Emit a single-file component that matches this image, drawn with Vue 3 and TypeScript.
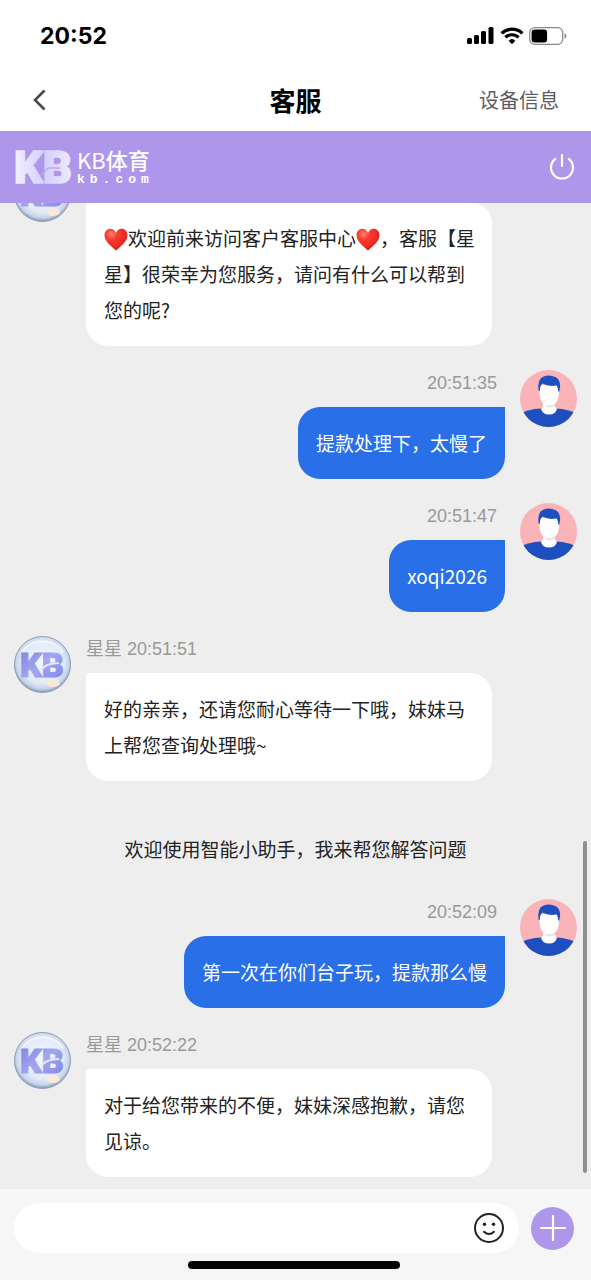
<script setup lang="ts">
import { ref } from 'vue'

interface Message {
  id: number
  kind: 'agent' | 'user' | 'system'
  time?: string
  text: string
}

const agentName = '星星'
const draft = ref('')

const messages = ref<Message[]>([
  { id: 1, kind: 'agent', text: '❤欢迎前来访问客户客服中心❤，客服【星星】很荣幸为您服务，请问有什么可以帮到您的呢?' },
  { id: 2, kind: 'user', time: '20:51:35', text: '提款处理下，太慢了' },
  { id: 3, kind: 'user', time: '20:51:47', text: 'xoqi2026' },
  { id: 4, kind: 'agent', time: '20:51:51', text: '好的亲亲，还请您耐心等待一下哦，妹妹马上帮您查询处理哦~' },
  { id: 5, kind: 'system', text: '欢迎使用智能小助手，我来帮您解答问题' },
  { id: 6, kind: 'user', time: '20:52:09', text: '第一次在你们台子玩，提款那么慢' },
  { id: 7, kind: 'agent', time: '20:52:22', text: '对于给您带来的不便，妹妹深感抱歉，请您见谅。' },
])

const parts = (text: string): string[] => text.split(/(❤)/).filter((p) => p !== '')
</script>

<template>
  <div class="page">
    <svg class="defs" width="0" height="0" aria-hidden="true">
      <defs>
        <radialGradient id="ball" cx="50%" cy="46%" r="54%">
          <stop offset="0" stop-color="#f4f7fe" />
          <stop offset="0.68" stop-color="#e3ebfa" />
          <stop offset="0.88" stop-color="#c6d3ea" />
          <stop offset="1" stop-color="#8193ac" />
        </radialGradient>
        <linearGradient id="ballText" x1="0" y1="0" x2="1" y2="1">
          <stop offset="0" stop-color="#7d7fdc" />
          <stop offset="0.5" stop-color="#a3a7f0" />
          <stop offset="1" stop-color="#7c7fe6" />
        </linearGradient>
        <linearGradient id="logoText" x1="0" y1="0" x2="1" y2="0">
          <stop offset="0" stop-color="#f2efff" />
          <stop offset="0.55" stop-color="#d6cffb" />
          <stop offset="1" stop-color="#efebff" />
        </linearGradient>
        <radialGradient id="heart" cx="30%" cy="25%" r="80%">
          <stop offset="0" stop-color="#ff8573" />
          <stop offset="0.3" stop-color="#f8402f" />
          <stop offset="0.75" stop-color="#ea2a20" />
          <stop offset="1" stop-color="#c81d18" />
        </radialGradient>
        <clipPath id="round"><circle cx="28.5" cy="28.5" r="28.5" /></clipPath>
      </defs>
    </svg>

    <div class="status">
      <span class="clock">20:52</span>
      <div class="indicators">
        <svg width="28" height="18" viewBox="0 0 28 18" aria-hidden="true">
          <rect x="0" y="11" width="5" height="6" rx="1.5" />
          <rect x="7" y="8" width="5" height="9" rx="1.5" />
          <rect x="14" y="4" width="5" height="13" rx="1.5" />
          <rect x="21.5" y="0" width="5" height="17" rx="1.5" />
        </svg>
        <svg width="24" height="18" viewBox="0 0 24 18" aria-hidden="true">
          <g fill="none" stroke="#000" stroke-width="3.2">
            <path d="M1.6 6.4a15 15 0 0 1 20.800 0" />
            <path d="M5.4 10.4a9.500 9.500 0 0 1 13.200 0" />
          </g>
          <path d="M8.600 13.700a5 5 0 0 1 6.800 0L12 17.300z" />
        </svg>
        <svg width="38" height="18" viewBox="0 0 38 18" aria-hidden="true">
          <rect x="0.7" y="0.7" width="33" height="16.6" rx="5" fill="none" stroke="#8b8b8b" stroke-width="1.3" />
          <rect x="2.6" y="2.6" width="15.5" height="12.8" rx="3" />
          <path d="M35.500 6.200q2 .8 2 2.800t-2 2.800z" fill="#8b8b8b" />
        </svg>
      </div>
    </div>

    <header class="nav">
      <button class="back" type="button" aria-label="返回">
        <svg width="14" height="22" viewBox="0 0 14 22" aria-hidden="true">
          <path d="M12.500 1.500L3 11l9.500 9.500" fill="none" stroke="#48484c" stroke-width="2.6" />
        </svg>
      </button>
      <h1 class="title">客服</h1>
      <button class="device" type="button">设备信息</button>
    </header>

    <div class="brand">
      <svg class="mark" width="58" height="40" viewBox="0 0 58 40" role="img" aria-label="KB">
        <text x="-1" y="36" fill="url(#logoText)" stroke="url(#logoText)" stroke-width="1.6" stroke-linejoin="round" font-family="Roboto, sans-serif" font-weight="900" font-size="45">KB</text>
        <path d="M26 29l7-8h12" fill="none" stroke="#b9a8f0" stroke-width="1.4" />
      </svg>
      <div class="words">
        <span class="name"><span class="latin">KB</span>体育</span>
        <span class="domain">kb.com</span>
      </div>
      <button class="power" type="button" aria-label="结束会话">
        <svg width="28" height="28" viewBox="0 0 28 28" aria-hidden="true">
          <path d="M7.300 5.800a11 11 0 1 0 13.400 0M14 2v11" fill="none" stroke="#fff" stroke-width="2.2" stroke-linecap="round" />
        </svg>
      </button>
    </div>

    <main class="chat">
      <template v-for="m in messages" :key="m.id">
        <p v-if="m.kind === 'system'" class="notice">{{ m.text }}</p>
        <article v-else class="message" :class="m.kind">
          <svg v-if="m.kind === 'agent'" class="avatar" viewBox="0 0 57 57" role="img" aria-label="KB">
            <circle cx="28.5" cy="28.5" r="28" fill="url(#ball)" stroke="#8c9db6" stroke-width="1" />
            <ellipse cx="39" cy="47" rx="7" ry="4" fill="#f7eadb" />
            <path d="M8 16a25 25 0 0 1 41 0" fill="none" stroke="#fff" stroke-width="2" opacity=".6" />
            <text x="6" y="41" fill="url(#ballText)" stroke="url(#ballText)" stroke-width="1.2" stroke-linejoin="round" font-family="Roboto, sans-serif" font-weight="900" font-size="34">KB</text>
            <path d="M27 34q4-5 10-6t8-1" fill="none" stroke="#e4e9fc" stroke-width="2" />
          </svg>
          <svg v-else class="avatar" viewBox="0 0 57 57" role="img" aria-label="我">
            <g clip-path="url(#round)">
              <rect width="57" height="57" fill="#fab4b7" />
              <path d="M0 60V44q8-5 21-5.500h15q13 .5 21 5.500v16z" fill="#1d4fbe" />
              <path d="M23 30h12v7l2 1.500q-1 6-8 6t-8-6l2-1.500z" fill="#fff" />
              <path d="M24 33q5 4 11 0v3q-5 2.500-9 .5z" fill="#e9e6e4" />
              <path d="M19.500 15h19.500v8q-.5 8-4 10.500-5.500 3-11.500 0Q20 31 19.500 23z" fill="#fff" />
              <path d="M18.700 21q-2-12 5-14.500 4-1.500 8.500-.5 8.500 1.500 8 10.500l-1 5h-1q0-4-1.500-6-9 1.500-14-2-3 2-3 7.500z" fill="#1d4fbe" />
            </g>
          </svg>
          <div class="body">
            <div class="meta">
              <template v-if="m.time">
                <span v-if="m.kind === 'agent'">{{ agentName }}&nbsp;</span><time>{{ m.time }}</time>
              </template>
            </div>
            <p class="bubble">
              <template v-for="(p, i) in parts(m.text)" :key="i">
                <svg v-if="p === '❤'" class="heart" viewBox="0 0 24 23" role="img" aria-label="❤">
                  <path d="M12 22.500C7.500 18.500.5 13.500.5 7.300.5 3.300 3.200.8 6.300.8c2.600 0 4.700 1.500 5.700 4.200 1-2.700 3.100-4.200 5.700-4.200 3.100 0 5.800 2.500 5.800 6.500 0 6.200-7 11.200-11.500 15.200z" fill="url(#heart)" />
                </svg>
                <template v-else>{{ p }}</template>
              </template>
            </p>
          </div>
        </article>
      </template>
      <span class="thumb" aria-hidden="true"></span>
    </main>

    <footer class="footer">
      <form class="composer" @submit.prevent>
        <div class="field">
          <input v-model="draft" class="input" type="text" aria-label="输入消息" />
          <button class="emoji" type="button" aria-label="表情">
            <svg width="32" height="32" viewBox="0 0 32 32" aria-hidden="true">
              <circle cx="16" cy="16" r="14" fill="none" stroke="#222" stroke-width="2" />
              <circle cx="11.5" cy="12.3" r="1.700" fill="#222" />
              <circle cx="20.5" cy="12.3" r="1.700" fill="#222" />
              <path d="M11 19.800q5 4.500 10 0" fill="none" stroke="#222" stroke-width="2" stroke-linecap="round" />
            </svg>
          </button>
        </div>
        <button class="add" type="button" aria-label="更多">
          <svg width="26" height="26" viewBox="0 0 26 26" aria-hidden="true">
            <path d="M13 1v24M1 13h24" stroke="#fff" stroke-width="2.2" stroke-linecap="round" />
          </svg>
        </button>
      </form>
      <div class="home"></div>
    </footer>
  </div>
</template>

<style>
body {
  margin: 0;
}
</style>

<style scoped>
.page {
  display: flex;
  flex-direction: column;
  height: 100vh;
  background: #eee;
  color: #222;
  font-family: "Noto Sans CJK SC", sans-serif;
  overflow: hidden;
}

.defs {
  position: absolute;
}

svg {
  display: block;
  flex: none;
}

button {
  display: flex;
  align-items: center;
  justify-content: center;
  margin: 0;
  padding: 0;
  border: 0;
  background: none;
  color: inherit;
  font: inherit;
}

.status {
  display: flex;
  flex: none;
  align-items: center;
  justify-content: space-between;
  height: 72px;
  padding: 0 24px 0 40px;
  background: #fff;
  color: #000;
}

.clock {
  font: 700 23px/28px Inter, sans-serif;
}

.indicators {
  display: flex;
  gap: 5px;
}

.nav {
  display: grid;
  grid-template-columns: 1fr auto 1fr;
  flex: none;
  align-items: center;
  height: 55px;
  padding: 0 32px 4px;
  background: #fff;
}

.back {
  justify-self: start;
}

.title {
  margin: 0;
  color: #000;
  font-size: 26px;
  font-weight: 700;
  line-height: 36px;
}

.device {
  justify-self: end;
  color: #5c5c64;
  font-size: 20px;
  line-height: 28px;
}

.brand {
  display: flex;
  flex: none;
  align-items: center;
  height: 72px;
  padding: 0 15px;
  background: #ae96ea;
  color: #fff;
}

.words {
  display: flex;
  flex-direction: column;
  margin-left: 4px;
}

.name {
  font-size: 22px;
  font-weight: 500;
  line-height: 26px;
}

.latin {
  font-weight: 400;
}

.domain {
  font: 700 13px/16px "Liberation Mono", monospace;
  letter-spacing: 5px;
}

.power {
  margin-left: auto;
}

.chat {
  position: relative;
  display: flex;
  flex: 1;
  flex-direction: column;
  justify-content: flex-end;
  gap: 24px;
  min-height: 0;
  padding: 0 14px 12px;
  overflow: hidden;
}

.message {
  display: flex;
  flex: none;
  align-items: flex-start;
  gap: 15px;
}

.user {
  flex-direction: row-reverse;
}

.avatar {
  width: 57px;
  height: 57px;
}

.body {
  display: flex;
  flex: 1;
  flex-direction: column;
  align-items: flex-start;
  margin-right: 85px;
}

.user .body {
  align-items: flex-end;
  margin-right: 0;
  margin-left: 85px;
}

.meta {
  height: 37px;
  color: #999;
  font: 18px/26px "Liberation Sans", "Noto Sans CJK SC", sans-serif;
}

.user .meta {
  padding-right: 8px;
}

.bubble {
  margin: 0;
  padding: 18px 16px 18px 18px;
  border-radius: 4px 22px 22px 22px;
  background: #fff;
  font-size: 19px;
  line-height: 36px;
}

.user .bubble {
  padding: 18px;
  border-radius: 22px 0 22px 22px;
  background: #296fe8;
  color: #fff;
}

.heart {
  display: inline-block;
  width: 24px;
  height: 23px;
  vertical-align: -5px;
}

.notice {
  flex: none;
  margin: 0;
  padding: 26px 0 8px;
  font-size: 19px;
  line-height: 36px;
  text-align: center;
}

.thumb {
  position: absolute;
  right: 4px;
  bottom: 16px;
  width: 4px;
  height: 332px;
  border-radius: 2px;
  background: #8f8f8f;
}

.footer {
  flex: none;
  padding: 14px 17px 11px 14px;
  background: #f6f6f6;
}

.composer {
  display: flex;
  align-items: center;
  gap: 12px;
}

.field {
  display: flex;
  flex: 1;
  align-items: center;
  height: 50px;
  padding: 0 14px 0 20px;
  border-radius: 25px;
  background: #fff;
}

.input {
  flex: 1;
  min-width: 0;
  padding: 0;
  border: 0;
  outline: 0;
  background: none;
  font: inherit;
  font-size: 19px;
}

.add {
  width: 43px;
  height: 43px;
  border-radius: 50%;
  background: #ae96ea;
}

.home {
  width: 38%;
  height: 8px;
  margin: 8px auto 0;
  border-radius: 4px;
  background: #000;
}
</style>
